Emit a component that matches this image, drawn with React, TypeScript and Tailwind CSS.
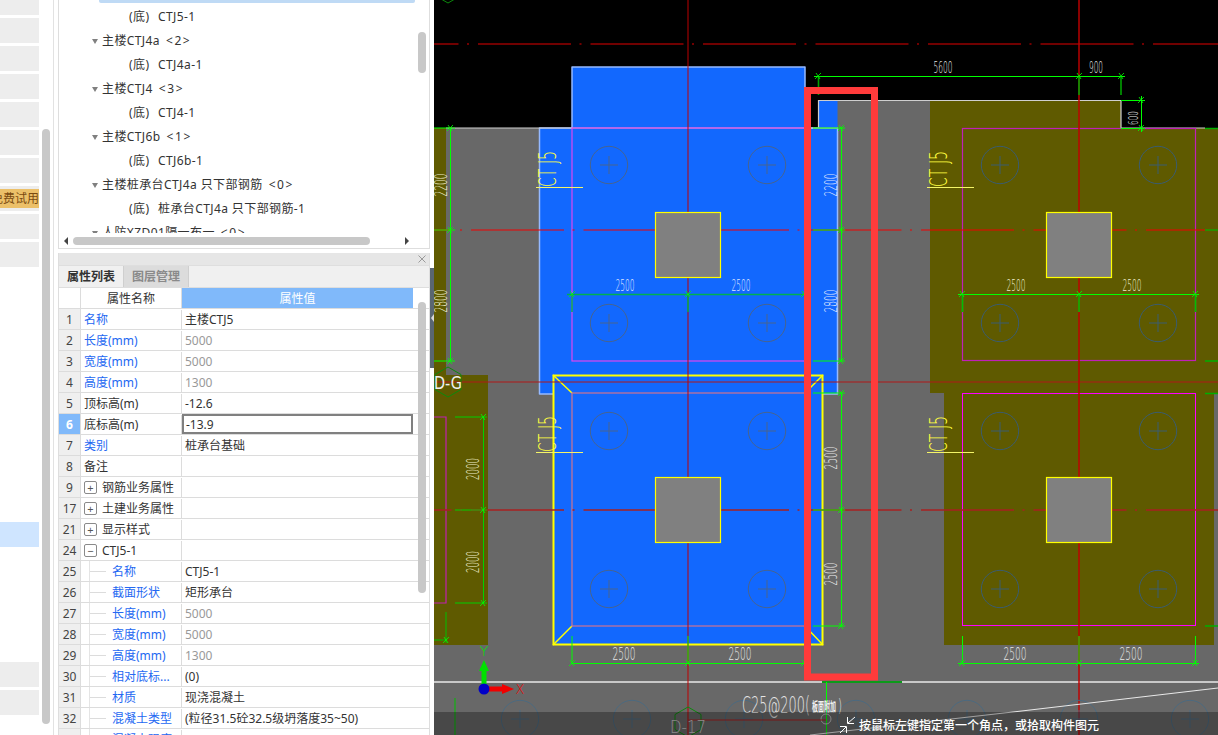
import React from 'react'

const font = { fontFamily: '"Noto Sans", "Noto Sans CJK SC", sans-serif' }

const treeRows = [
  { kind: 'child', text: 'CTJ5-1' },
  { kind: 'parent', text: '主楼CTJ4a', count: '<2>' },
  { kind: 'child', text: 'CTJ4a-1' },
  { kind: 'parent', text: '主楼CTJ4', count: '<3>' },
  { kind: 'child', text: 'CTJ4-1' },
  { kind: 'parent', text: '主楼CTJ6b', count: '<1>' },
  { kind: 'child', text: 'CTJ6b-1' },
  { kind: 'parent', text: '主楼桩承台CTJ4a 只下部钢筋', count: '<0>' },
  { kind: 'child', text: '桩承台CTJ4a 只下部钢筋-1' },
  { kind: 'parent', text: '人防XZD01隔一布一', count: '<0>' },
]

type Prop = {
  n: number
  name: string
  value?: string
  blue?: boolean
  gray?: boolean
  active?: boolean
  toggle?: '+' | '-'
  child?: boolean
}

const props: Prop[] = [
  { n: 1, name: '名称', value: '主楼CTJ5', blue: true },
  { n: 2, name: '长度(mm)', value: '5000', blue: true, gray: true },
  { n: 3, name: '宽度(mm)', value: '5000', blue: true, gray: true },
  { n: 4, name: '高度(mm)', value: '1300', blue: true, gray: true },
  { n: 5, name: '顶标高(m)', value: '-12.6' },
  { n: 6, name: '底标高(m)', value: '-13.9', active: true },
  { n: 7, name: '类别', value: '桩承台基础', blue: true },
  { n: 8, name: '备注' },
  { n: 9, name: '钢筋业务属性', toggle: '+' },
  { n: 17, name: '土建业务属性', toggle: '+' },
  { n: 21, name: '显示样式', toggle: '+' },
  { n: 24, name: 'CTJ5-1', toggle: '-' },
  { n: 25, name: '名称', value: 'CTJ5-1', blue: true, child: true },
  { n: 26, name: '截面形状', value: '矩形承台', blue: true, child: true },
  { n: 27, name: '长度(mm)', value: '5000', blue: true, gray: true, child: true },
  { n: 28, name: '宽度(mm)', value: '5000', blue: true, gray: true, child: true },
  { n: 29, name: '高度(mm)', value: '1300', blue: true, gray: true, child: true },
  { n: 30, name: '相对底标...', value: '(0)', blue: true, child: true },
  { n: 31, name: '材质', value: '现浇混凝土', blue: true, child: true },
  { n: 32, name: '混凝土类型', value: '(粒径31.5砼32.5级坍落度35~50)', blue: true, child: true },
  { n: 33, name: '混凝土强度', blue: true, child: true },
]

const navRows = ['', '', '', '', '', '', 'promo', '', '', 'w', 'w', 'w', 'w', 'w', 'w', 'w', 'w', 'w', 'on', 'w', 'w', 'w', 'w', '', '']

const Sidebar = () => (
  <div className="flex w-[54px] shrink-0 border-r border-[#e2e2e2]">
    <div className="flex w-[39px] shrink-0 flex-col gap-[3px] overflow-hidden">
      <div className="h-[15px] shrink-0 bg-[#ededed]" />
      {navRows.map((r, i) => {
        if (r === 'promo')
          return (
            <div key={i} className="flex h-[25px] shrink-0 items-center justify-end overflow-hidden bg-[#ededed]">
              <span className="flex h-[19px] w-full items-center justify-end whitespace-nowrap bg-[#ecc069] text-[12px] text-[#7a4a10]">
                免费试用
              </span>
            </div>
          )
        return (
          <div
            key={i}
            className={
              r === 'on' ? 'h-[25px] shrink-0 bg-[#cfe5ff]' : r === 'w' ? 'h-[25px] shrink-0 bg-white' : 'h-[25px] shrink-0 bg-[#ededed]'
            }
          />
        )
      })}
    </div>
    <div className="pl-[3px] pt-[129px]">
      <div className="h-[595px] w-[8px] rounded-[4px] bg-[#c8c8c8]" />
    </div>
  </div>
)

const TreePanel = () => (
  <div className="relative flex h-[249px] shrink-0 flex-col border-x border-b border-[#dedede]">
    <div className="h-[233px] overflow-hidden text-[12px] tracking-[0.4px] text-[#333]">
      <div className="ml-[40px] h-[3px] w-[316px] rounded-b-[2px] bg-[#bfdaf5]" />
      <div className="pt-[2px]">
        {treeRows.map((row, i) =>
          row.kind === 'child' ? (
            <div key={i} className="flex h-[24px] items-center whitespace-nowrap pl-[70px]">
              <span className="w-[29px]">(底)</span>
              <span>{row.text}</span>
            </div>
          ) : (
            <div key={i} className="flex h-[24px] items-center whitespace-nowrap pl-[33px]">
              <span className="mr-[4px] h-0 w-0 border-x-[3.5px] border-t-[5px] border-x-transparent border-t-[#808080]" />
              <span>{row.text}</span>
              <span className="ml-[6px] tracking-[1.6px]">{row.count}</span>
            </div>
          ),
        )}
      </div>
    </div>
    <div className="flex h-[15px] items-center">
      <span className="ml-[5px] h-0 w-0 border-y-[4px] border-r-[4px] border-y-transparent border-r-[#444]" />
      <div className="ml-[5px] h-[8px] w-[297px] rounded-[4px] bg-[#c8c8c8]" />
      <span className="ml-[35px] h-0 w-0 border-y-[4px] border-l-[4px] border-y-transparent border-l-[#444]" />
    </div>
    <div className="absolute left-[359px] top-[32px] h-[41px] w-[8px] rounded-[4px] bg-[#c8c8c8]" />
  </div>
)

const PropRow = ({ p }: { p: Prop }) => (
  <div className="flex h-[21px] shrink-0 border-b border-[#dcdcdc] pt-px text-[12px] leading-[19px]">
    <div
      className={
        p.active
          ? '-mt-px w-[22px] shrink-0 border-r border-[#dcdcdc] bg-[#80b9fa] pt-px text-center font-bold text-white'
          : '-mt-px w-[22px] shrink-0 border-r border-[#dcdcdc] bg-[#efefef] pt-px text-center text-[#444]'
      }
    >
      {p.n}
    </div>
    <div
      className={
        p.blue
          ? 'relative flex w-[101px] shrink-0 items-center border-r border-[#dcdcdc] pl-[2px] text-[#2468f2]'
          : 'relative flex w-[101px] shrink-0 items-center border-r border-[#dcdcdc] pl-[2px] text-[#333]'
      }
    >
      {p.toggle && (
        <span className="ml-px mr-[5px] flex h-[13px] w-[13px] items-center justify-center rounded-[2px] border border-[#8a8a8a] text-[11px] leading-none text-[#555]">
          {p.toggle === '+' ? '+' : '−'}
        </span>
      )}
      {p.child && (
        <>
          <span className="absolute -top-px bottom-0 left-[8px] w-px bg-[#e4e4e4]" />
          <span className="ml-[7px] mr-[6px] h-px w-[16px] bg-[#dcdcdc]" />
        </>
      )}
      <span className={p.toggle || p.child ? 'whitespace-nowrap' : 'ml-px whitespace-nowrap'}>{p.name}</span>
    </div>
    <div
      className={
        p.active
          ? '-mt-px flex w-[231px] shrink-0 items-center border-2 border-[#808080] pl-[2px] pt-px text-[#333]'
          : p.gray
            ? 'flex w-[231px] shrink-0 items-center pl-[3px] text-[#999]'
            : 'flex w-[231px] shrink-0 items-center pl-[3px] text-[#333]'
      }
    >
      <span className="whitespace-nowrap">{p.value}</span>
    </div>
  </div>
)

const PropPanel = () => (
  <div className="relative flex flex-1 flex-col overflow-hidden border-x border-[#dedede]">
    <div className="flex h-[12px] shrink-0 items-center justify-end bg-[#e6e6e6] pr-[3px] text-[#999]">
      <svg width="8" height="8" viewBox="0 0 8 8">
        <path d="M0.5 0.5 L7.5 7.5 M7.5 0.5 L0.5 7.5" stroke="#9a9a9a" strokeWidth="1" />
      </svg>
    </div>
    <div className="flex h-[23px] shrink-0 border-y border-[#dedede] bg-[#f0f0f0] text-[12px] font-bold">
      <div className="flex w-[65px] items-center justify-center border-r border-[#cfcfcf] text-[#333]">属性列表</div>
      <div className="flex w-[65px] items-center justify-center border-r border-[#cfcfcf] bg-[#dcdcdc] text-[#8a8a8a]">图层管理</div>
    </div>
    <div className="flex h-[21px] shrink-0 border-b border-[#dcdcdc] text-[12px]">
      <div className="w-[22px] shrink-0 border-r border-[#dcdcdc]" />
      <div className="flex w-[101px] shrink-0 items-center justify-center border-r border-[#dcdcdc] pt-px text-[#333]">属性名称</div>
      <div className="flex w-[231px] shrink-0 items-center justify-center bg-[#80b9fa] pt-px text-white">属性值</div>
    </div>
    {props.map((p) => (
      <PropRow key={p.n} p={p} />
    ))}
    <div className="absolute left-[359px] top-[49px] h-[291px] w-[8px] rounded-[4px] bg-[#c8c8c8]" />
  </div>
)

const Splitter = () => (
  <div className="w-[4px] shrink-0 pt-[268px]">
    <div className="flex h-[100px] items-center justify-center bg-[#5a6672]">
      <span className="h-0 w-0 border-y-[4px] border-r-[3px] border-y-transparent border-r-[#d8d8d8]" />
    </div>
  </div>
)

// CAD helpers
const CadText = ({
  x,
  y,
  w,
  size = 17,
  fill = '#e8e8e8',
  weight = 200,
  rot,
  children,
}: {
  x: number
  y: number
  w: number
  size?: number
  fill?: string
  weight?: number
  rot?: boolean
  children: React.ReactNode
}) => (
  <text
    x={x}
    y={y}
    transform={rot ? `rotate(-90 ${x} ${y})` : undefined}
    textAnchor="middle"
    dominantBaseline="central"
    textLength={w}
    lengthAdjust="spacingAndGlyphs"
    fontSize={size}
    fontWeight={weight}
    fontFamily='"DejaVu Sans", "Noto Sans CJK SC", sans-serif'
    fill={fill}
  >
    {children}
  </text>
)

const Tick = ({ x, y, c = '#00ff00' }: { x: number; y: number; c?: string }) => (
  <path d={`M${x - 3} ${y + 3} L${x + 3} ${y - 3} M${x - 2} ${y - 3} L${x + 2} ${y + 3}`} stroke={c} strokeWidth="0.8" />
)

const Pile = ({ x, y, c = '#48648e' }: { x: number; y: number; c?: string }) => (
  <g stroke={c} fill="none" strokeWidth="1">
    <circle cx={x} cy={y} r="18.7" />
    <path d={`M${x - 9} ${y} H${x + 9} M${x} ${y - 9} V${y + 9}`} />
  </g>
)

const Hex = ({ x, y, c = '#0c8a0c' }: { x: number; y: number; c?: string }) => (
  <path
    d={`M${x} ${y - 15} L${x + 13} ${y - 7.5} V${y + 7.5} L${x} ${y + 15} L${x - 13} ${y + 7.5} V${y - 7.5} Z`}
    stroke={c}
    fill="none"
    strokeWidth="1"
  />
)

const Column = ({ x, y }: { x: number; y: number }) => (
  <rect x={x + 0.5} y={y + 0.5} width="65" height="65" fill="#808080" stroke="#ffff00" strokeWidth="1.2" />
)

const PileCap = ({ x, y, c }: { x: number; y: number; c?: string }) => (
  <>
    <Pile x={x + 37} y={y + 37} c={c} />
    <Pile x={x + 195} y={y + 37} c={c} />
    <Pile x={x + 37} y={y + 195} c={c} />
    <Pile x={x + 195} y={y + 195} c={c} />
  </>
)

const CapLabel = ({ x, y }: { x: number; y: number }) => (
  <>
    <CadText x={x + 9} y={y - 18} w={36} size={24} fill="#ffff40" rot>
      CT J5
    </CadText>
    <path d={`M${x - 3} ${y + 0.5} H${x + 44}`} stroke="#f4f468" strokeWidth="1" />
  </>
)

const dash = '93 8.5 2 9'

const CadCanvas = () => (
  <div className="min-w-0 flex-1 bg-black">
    <svg viewBox="434 0 784 735" className="block h-[735px] w-[784px]">
      <rect x="434" y="0" width="784" height="735" fill="#000" />
      <rect x="434" y="128" width="784" height="607" fill="#686868" />
      <rect x="837" y="100" width="284" height="28" fill="#686868" />

      {/* olive slabs */}
      <path d="M930 100 H1121 V128 H1218 V393 H1214 V645 H944 V393 H930 Z" fill="#5f5a00" />
      <path d="M434 128 H446 V375 H488 V645 H434 Z" fill="#5f5a00" />

      {/* blue slabs */}
      <path d="M572 67 H805 V128 H837.5 V394 H539.5 V128 H572 Z" fill="#1268fe" stroke="#95b9ff" strokeWidth="1.5" strokeLinejoin="round" />
      <path d="M818.5 128 V100.5 H837.5 V128 Z" fill="#1268fe" />
      <rect x="553.5" y="375.5" width="269" height="269" fill="#1268fe" stroke="#ffff00" strokeWidth="2" />
      <path d="M553 375 L572 393 M823 375 L805 393 M553 645 L572 626 M823 645 L805 626" stroke="#ffff00" strokeWidth="1.5" />

      {/* slab edges */}
      <path d="M446 128 H838 M818.5 128 V100.5 H1121 V128 H1205" stroke="#cfcfcf" strokeWidth="1.2" fill="none" />
      <path d="M434 682 H822 M902 682 H1218" stroke="#c8c8c8" strokeWidth="2" />
      <path d="M822 682 H902" stroke="#0c9a1a" strokeWidth="2" />

      {/* pile cap outlines */}
      <rect x="572" y="128" width="233" height="233" fill="none" stroke="#dc46ee" strokeWidth="1.2" />
      <rect x="572" y="393" width="233" height="233" fill="none" stroke="#d0748e" strokeWidth="1.2" />
      <rect x="962.5" y="128.5" width="233" height="232" fill="none" stroke="#c020b8" strokeWidth="1.2" />
      <rect x="962.5" y="393.5" width="233" height="232" fill="none" stroke="#ff00ff" strokeWidth="1" />
      <path d="M434 417 H446 V603 H434" fill="none" stroke="#c020b0" strokeWidth="1.2" />

      <PileCap x={572} y={128} />
      <PileCap x={572} y={394} />
      <PileCap x={963} y={128} c="#3a5c70" />
      <PileCap x={963} y={394} c="#3a5c70" />

      {/* axis lines */}
      <g strokeWidth="1.2" fill="none">
        <path d="M434 44 H1218" stroke="#e00000" strokeDasharray={dash} strokeDashoffset="68.5" />
        <path d="M434 230 H1218" stroke="#f00000" strokeDasharray={dash} strokeDashoffset="75.5" />
        <path d="M434 510 H1218" stroke="#a82020" strokeWidth="1.6" strokeDasharray={dash} strokeDashoffset="75.5" />
        <path d="M434 382 H1218" stroke="#b01818" />
        <path d="M688 0 V735" stroke="#c00000" strokeWidth="1.8" strokeOpacity="0.55" />
        <path d="M1079 0 V735" stroke="#c00000" strokeWidth="1.8" strokeOpacity="0.8" />
      </g>

      <Column x={655} y={212} />
      <Column x={655} y={477} />
      <Column x={1046} y={212} />
      <Column x={1046} y={477} />

      <CapLabel x={539} y={187} />
      <CapLabel x={539} y={452} />
      <CapLabel x={930} y={187} />
      <CapLabel x={930} y={452} />

      {/* dimensions */}
      <g stroke="#00ff00" strokeWidth="1" fill="none">
        <path d="M450.5 128 V361 M434 128 H455 M434 230 H455 M434 361 H455" />
        <path d="M841.5 128 V361 M841.5 393 V626" />
        <path d="M845 128 H813 M845 230 H813 M845 361 H813 M845 393 H813 M845 510 H813 M845 626 H813" />
        <path d="M814 76.5 H1125 M1121 100.5 H1145 M1141.5 96 V132 M1121 128.5 H1145" />
        <path d="M958 294.5 H1199" />
        <path d="M962.5 294 V312 M1079 294 V312 M1195.5 294 V312" strokeWidth="1.6" stroke="#00c000" />
        <path d="M818.5 76 V95 M1079 76 V95 M1121 76 V95" strokeWidth="1.6" stroke="#00a000" />
        <path d="M1205 128.5 H1218 M1205 230 H1218 M1205 361 H1218 M1205 393.5 H1218 M1205 626 H1218" stroke="#00b000" strokeWidth="1.5" />
        <path d="M483.5 417 V603 M455 417 H487 M455 510 H487 M455 603 H487" stroke="#00d000" />
        <path d="M446 612 V643 M434 640 H446 M455 698 V735" stroke="#00c000" />
        <path d="M571 663.5 H805 M572 636 V663 M688 636 V663 M804.5 636 V663" />
        <path d="M958 663.5 H1199 M962.5 636 V663 M1079 636 V663 M1195.5 636 V663" />
        <path d="M826.5 682 V735" />
        <path d="M567 294.5 H805 M572 294 V312 M688 294 V312" stroke="#00b14f" strokeWidth="1.5" />
      </g>
      {[
        [450, 128], [450, 230], [450, 361],
        [841, 128], [841, 230], [841, 361], [841, 393], [841, 510], [841, 626],
        [818, 76], [1079, 76], [1121, 76], [1141, 100], [1141, 128],
        [962, 294], [1079, 294], [1195, 294],
        [572, 294], [688, 294], [804, 294],
        [483, 417], [483, 510], [483, 603], [446, 640],
        [572, 663], [688, 663], [804, 663], [962, 663], [1079, 663], [1195, 663],
      ].map(([x, y]) => (
        <Tick key={`${x}-${y}`} x={x} y={y} />
      ))}

      <CadText x={441} y={185} w={23} fill="#f0f0d0" rot>2200</CadText>
      <CadText x={441} y={301} w={23} fill="#f0f0d0" rot>2800</CadText>
      <CadText x={831} y={185} w={23} fill="#e0e8ff" rot>2200</CadText>
      <CadText x={831} y={301} w={23} fill="#e0e8ff" rot>2800</CadText>
      <CadText x={831} y={458} w={23} rot>2500</CadText>
      <CadText x={831} y={574} w={23} rot>2500</CadText>
      <CadText x={473} y={469} w={22} fill="#f0f0d0" rot>2000</CadText>
      <CadText x={473} y={562} w={22} fill="#f0f0d0" rot>2000</CadText>
      <CadText x={1133} y={118} w={14} size={14} rot>600</CadText>
      <CadText x={625} y={286} w={19} size={15} fill="#e0e8ff">2500</CadText>
      <CadText x={741} y={286} w={19} size={15} fill="#e0e8ff">2500</CadText>
      <CadText x={943} y={68} w={19} size={15}>5600</CadText>
      <CadText x={1096} y={68} w={14} size={15}>900</CadText>
      <CadText x={1016} y={286} w={19} size={15} fill="#f0f0d0">2500</CadText>
      <CadText x={1132} y={286} w={19} size={15} fill="#f0f0d0">2500</CadText>
      <CadText x={624} y={654} w={23} size={17}>2500</CadText>
      <CadText x={740} y={654} w={23} size={17}>2500</CadText>
      <CadText x={1015} y={654} w={23} size={17}>2500</CadText>
      <CadText x={1131} y={654} w={23} size={17}>2500</CadText>

      <Hex x={448} y={382} />
      <Hex x={448} y={-12} />
      <CadText x={448} y={382} w={28} size={18} weight={400} fill="#f0f0f0">D-G</CadText>

      {/* bottom row of piles */}
      {[520, 632, 744, 856, 967, 1079, 1190].map((x) => (
        <Pile key={x} x={x} y={719} c="#4c6a80" />
      ))}
      <path d="M1218 688 L1013 712 L810 735" stroke="#e8e8e8" strokeWidth="1" fill="none" />
      <circle cx="826" cy="719" r="5" fill="none" stroke="#bcbcbc" />
      <Hex x={688} y={722} />
      <path d="M688 720 H826" stroke="#a82020" />
      <CadText x={776} y={705} w={68} size={23} fill="#e6e6e6">C25@200(</CadText>
      <CadText x={824} y={706} w={24} size={13} weight={700} fill="#f0f0f0">板面附加</CadText>
      <CadText x={840} y={705} w={4} size={18} fill="#e6e6e6">)</CadText>

      {/* axis gizmo */}
      <path d="M484 660 L489 671 H486.5 V685 H481.5 V671 H479 Z" fill="#00e000" />
      <path d="M488 686.5 H502 V684 L514 689 L502 694 V691.5 H488 Z" fill="#f00000" />
      <circle cx="484" cy="689" r="5.5" fill="#0000c8" />
      <CadText x={484} y={651} w={9} size={14} fill="#00e000">Y</CadText>
      <CadText x={520} y={689} w={9} size={14} fill="#f00000">X</CadText>

      {/* red markup box */}
      <rect x="807.5" y="90.5" width="67" height="586.5" fill="none" stroke="#ff3b3b" strokeWidth="7" />

      {/* status strip */}
      <rect x="434" y="712" width="784" height="23" fill="#000" fillOpacity="0.3" />
      <CadText x={688} y={727} w={36} size={17} fill="#8c8c8c">D-17</CadText>
      <path d="M847.5 717 V723.5 H854 M848 723 L855 717 M840 726.5 H846.5 V733 M846 727 L840 733" stroke="#fff" strokeWidth="1" fill="none" />
      <text x="859" y="730" fontSize="12" fontWeight="500" fill="#fff" fontFamily='"Noto Sans CJK SC", sans-serif'>
        {'按鼠标左键指定第一个角点\uFF0C或拾取构件图元'}
      </text>
    </svg>
  </div>
)

export default function App() {
  return (
    <div className="flex h-[735px] w-[1218px] overflow-hidden bg-white" style={font}>
      <Sidebar />
      <div className="ml-[4px] flex w-[372px] shrink-0 flex-col">
        <TreePanel />
        <div className="h-[4px] shrink-0" />
        <PropPanel />
      </div>
      <Splitter />
      <CadCanvas />
    </div>
  )
}
